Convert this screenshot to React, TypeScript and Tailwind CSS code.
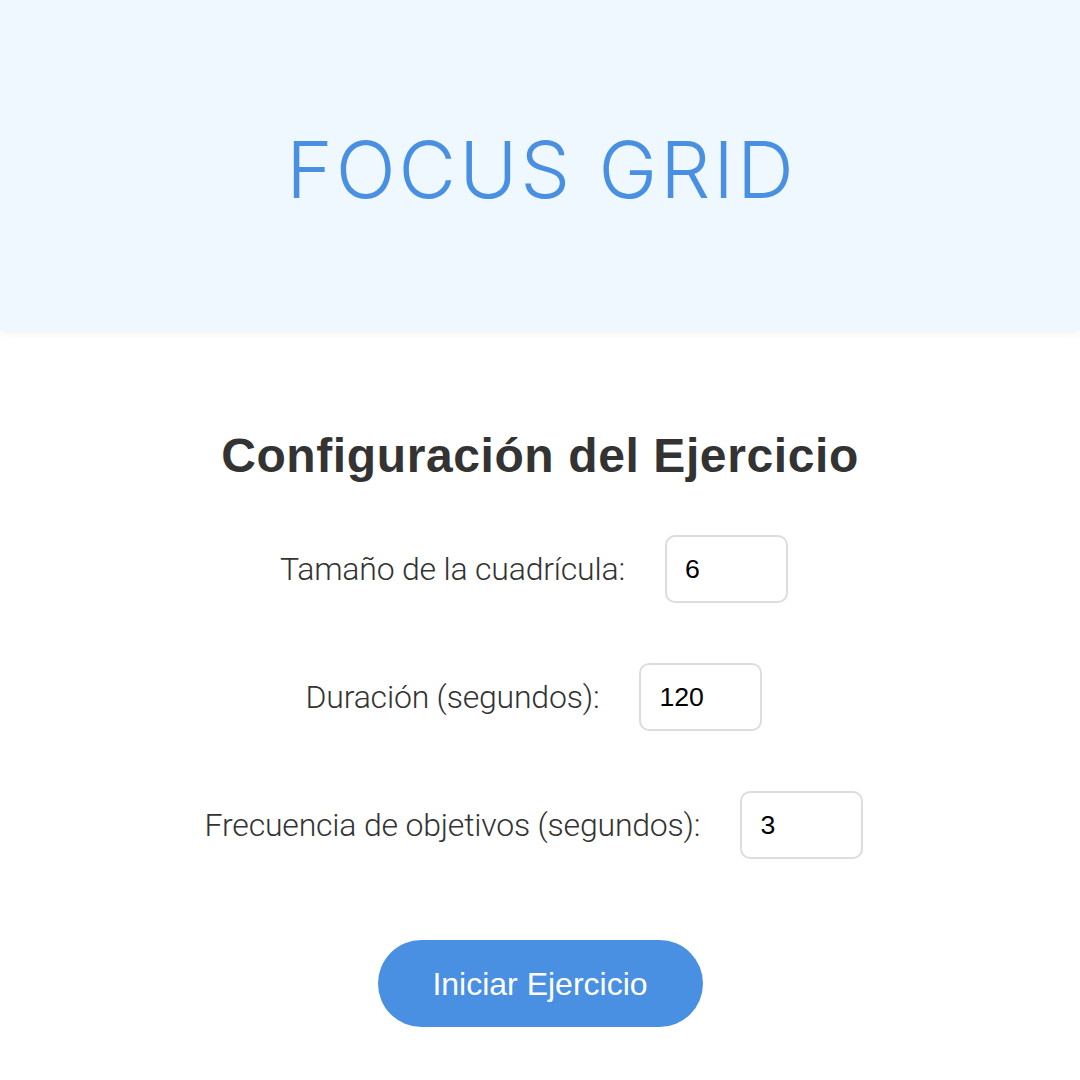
import React from "react";

function Row({ label, value }: { label: string; value: string }) {
  return (
    <div className="flex items-center justify-center gap-[40px] pr-[12px]">
      <label className="text-[32px] leading-[40px] text-[#333] font-light tracking-[-0.2px]" style={{ fontFamily: "Roboto, sans-serif" }}>
        {label}
      </label>
      <input
        defaultValue={value}
        type="number"
        className="w-[123px] h-[68px] border-2 border-[#dddddd] rounded-[10px] pl-[18px] text-[26.67px] text-black bg-white outline-none [appearance:textfield]"
        style={{ fontFamily: '"Liberation Sans", Arial, sans-serif' }}
      />
    </div>
  );
}

export default function App() {
  return (
    <div className="w-full min-h-[1080px] bg-white" style={{ fontFamily: '"Liberation Sans", Arial, sans-serif' }}>
      <header className="h-[331px] bg-[#f0f8ff] flex items-center justify-center shadow-[0_2px_8px_rgba(0,0,0,0.06)]">
        <h1
          className="text-[79px] leading-[96px] font-light text-[#4a90e2] mt-[6px] tracking-[3px] pl-[3px]"
          style={{ fontFamily: "Inter, sans-serif" }}
        >
          FOCUS GRID
        </h1>
      </header>
      <main className="flex flex-col items-center pt-[97px]">
        <h2 className="text-[48px] leading-[56px] font-bold text-[#333] tracking-[0.6px]">Configuración del Ejercicio</h2>
        <div className="flex flex-col gap-[60px] mt-[51px]">
          <Row label="Tamaño de la cuadrícula:" value="6" />
          <Row label="Duración (segundos):" value="120" />
          <Row label="Frecuencia de objetivos (segundos):" value="3" />
        </div>
        <button className="mt-[81px] w-[325px] h-[87px] rounded-full bg-[#4a90e2] text-white text-[32px]">
          Iniciar Ejercicio
        </button>
      </main>
    </div>
  );
}
